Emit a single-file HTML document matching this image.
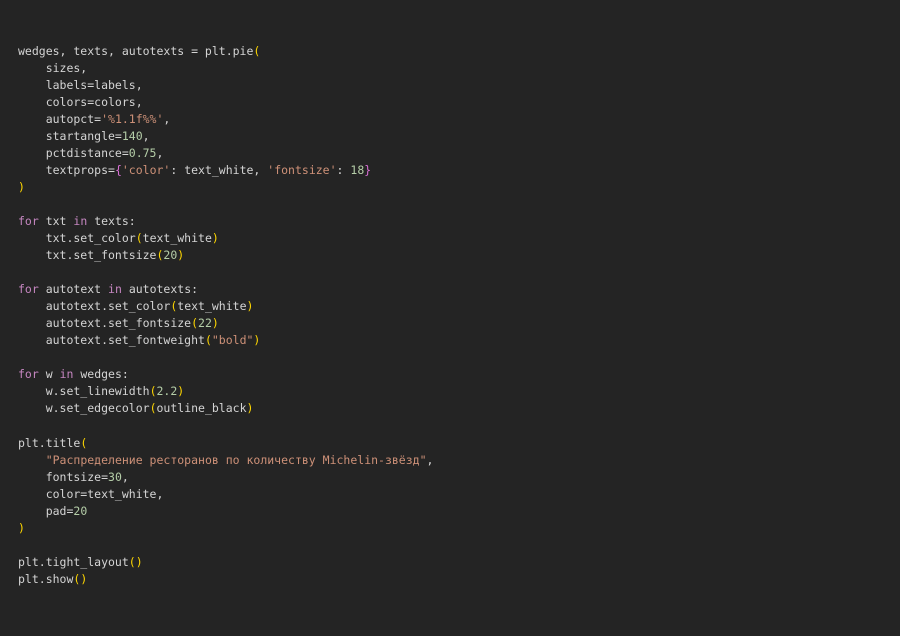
<!DOCTYPE html>
<html><head><meta charset="utf-8"><style>
html,body{margin:0;padding:0;background:#242424;width:900px;height:636px;overflow:hidden}
pre{margin:0;position:absolute;left:18px;top:42.5px;font-family:"DejaVu Sans Mono","Liberation Mono",monospace;font-size:11.5px;line-height:17.05px;color:#d4d4d4}
.k{color:#c586c0}.s{color:#ce9178}.n{color:#b5cea8}.y{color:#ffd700}.p{color:#da70d6}
</style></head><body><pre>wedges, texts, autotexts = plt.pie<span class="y">(</span>
    sizes,
    labels=labels,
    colors=colors,
    autopct=<span class="s">'%1.1f%%'</span>,
    startangle=<span class="n">140</span>,
    pctdistance=<span class="n">0.75</span>,
    textprops=<span class="p">{</span><span class="s">'color'</span>: text_white, <span class="s">'fontsize'</span>: <span class="n">18</span><span class="p">}</span>
<span class="y">)</span>

<span class="k">for</span> txt <span class="k">in</span> texts:
    txt.set_color<span class="y">(</span>text_white<span class="y">)</span>
    txt.set_fontsize<span class="y">(</span><span class="n">20</span><span class="y">)</span>

<span class="k">for</span> autotext <span class="k">in</span> autotexts:
    autotext.set_color<span class="y">(</span>text_white<span class="y">)</span>
    autotext.set_fontsize<span class="y">(</span><span class="n">22</span><span class="y">)</span>
    autotext.set_fontweight<span class="y">(</span><span class="s">"bold"</span><span class="y">)</span>

<span class="k">for</span> w <span class="k">in</span> wedges:
    w.set_linewidth<span class="y">(</span><span class="n">2.2</span><span class="y">)</span>
    w.set_edgecolor<span class="y">(</span>outline_black<span class="y">)</span>

plt.title<span class="y">(</span>
    <span class="s">"Распределение ресторанов по количеству Michelin-звёзд"</span>,
    fontsize=<span class="n">30</span>,
    color=text_white,
    pad=<span class="n">20</span>
<span class="y">)</span>

plt.tight_layout<span class="y">()</span>
plt.show<span class="y">()</span></pre></body></html>
